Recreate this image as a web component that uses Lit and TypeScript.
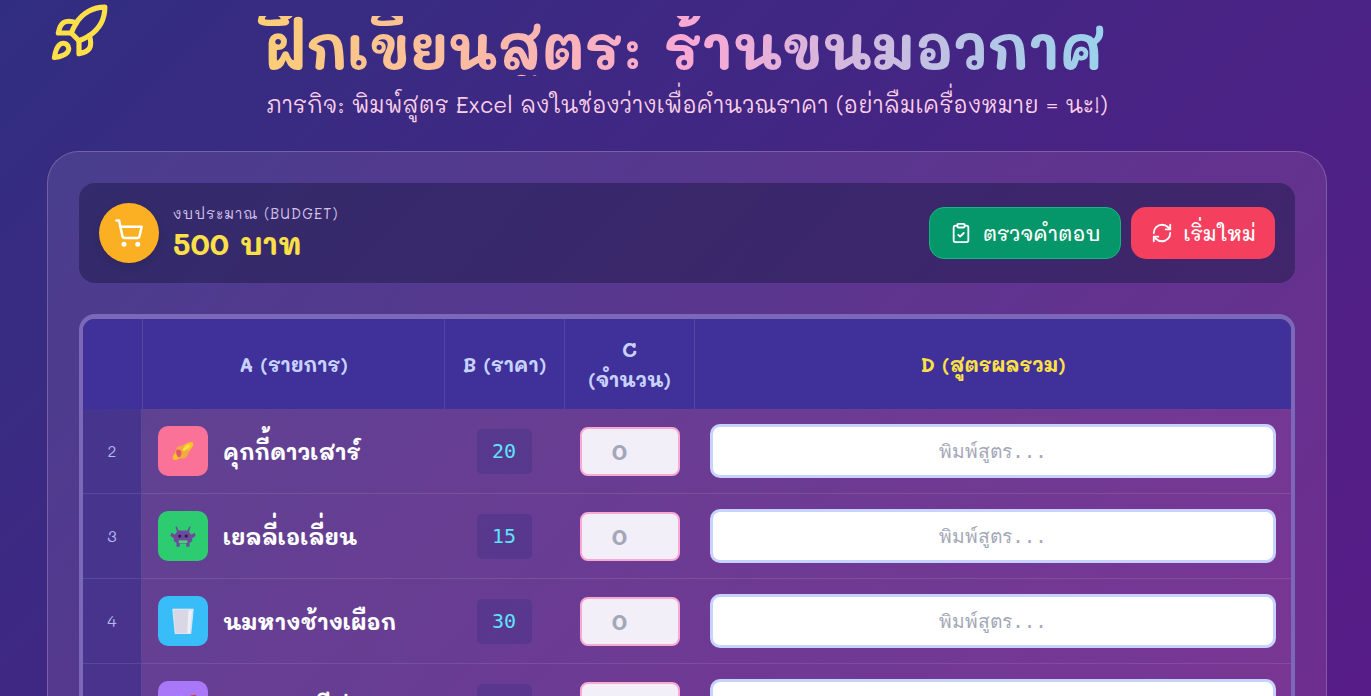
import { LitElement, html, css, svg } from 'lit';
import { customElement } from 'lit/decorators.js';

const planet = svg`<svg class="pic" viewBox="0 0 24 24"><ellipse cx="12" cy="12" rx="12" ry="4" transform="rotate(-40 12 12)" fill="#f7c51f"/><circle cx="11" cy="13" r="6" fill="#efae3a"/><path d="M6 11c2-1 4 0 4.500 2s-.5 4-2 5c-2-1-3.500-4-2.500-7z" fill="#e4566e"/><ellipse cx="15" cy="9" rx="4" ry="1.500" transform="rotate(-40 15 9)" fill="#fcdc55"/></svg>`;

const alien = svg`<svg class="pic" viewBox="0 0 24 24"><path d="M6 3l2 4h8l2-4 1 .5-1.500 4.500 2 2.500L23 9l.5 3-3 2v2.500l-2.500 2V22h-3v-3H9v3H6v-3.500l-2.500-2V14l-3-2L1 9l3.500 1.500 2-2.500L5 3.500z" fill="#6d4a9c"/><circle cx="9" cy="12" r="1.500" fill="#2c1c50"/><circle cx="15" cy="12" r="1.500" fill="#2c1c50"/><rect x="8" y="16" width="8" height="2.500" fill="#4cd080"/></svg>`;

const glass = svg`<svg class="pic" viewBox="0 0 24 24"><path d="M2.500 1h19l-2.300 23H4.800z" fill="#d9d7e5" stroke="#f4f6fb" stroke-width=".6"/><path d="M17 2h3.500l-2.100 21H16z" fill="#eef0f7"/></svg>`;

const rows = [
  { n: 2, icon: planet, tone: 'pink', name: 'คุกกี้ดาวเสาร์', price: 20 },
  { n: 3, icon: alien, tone: 'green', name: 'เยลลี่เอเลี่ยน', price: 15 },
  { n: 4, icon: glass, tone: 'blue', name: 'นมหางช้างเผือก', price: 30 },
  { n: 5, icon: html`🚀`, tone: 'violet', name: 'ขนมยานสีม่วง', price: 25 },
];

const rocket = svg`<path d="M4.5 16.500c-1.500 1.260-2 5-2 5s3.740-.5 5-2c.710-.840.700-2.130-.090-2.910a2.180 2.180 0 0 0-2.910-.090z"/><path d="m12 15-3-3a22 22 0 0 1 2-3.950A12.880 12.880 0 0 1 22 2c0 2.720-.780 7.500-6 11a22.350 22.350 0 0 1-4 2z"/><path d="M9 12H4s.550-3.030 2-4c1.620-1.080 5 0 5 0"/><path d="M12 15v5s3.030-.550 4-2c1.080-1.620 0-5 0-5"/>`;

@customElement('app-root')
export class AppRoot extends LitElement {
  static styles = css`
    :host {
      display: block;
      height: 696px;
      overflow: hidden;
      background: linear-gradient(135deg, #312e81, #581c87);
      font-family: 'Mali', 'Liberation Sans', sans-serif;
      color: #fff;
    }
    .page {
      position: relative;
      width: 1280px;
      margin-left: 47px;
    }
    .rocket {
      position: absolute;
      left: 1px;
      top: 2px;
      width: 62px;
      height: 62px;
      fill: none;
      stroke: #fde047;
      stroke-width: 2;
      stroke-linecap: round;
      stroke-linejoin: round;
    }
    header {
      height: 151px;
      text-align: center;
      box-sizing: border-box;
      padding-top: 16px;
    }
    h1 {
      margin: 0 0 14px;
      padding-right: 5px;
      font-size: 60.2px;
      line-height: 60px;
      font-weight: 700;
      background: linear-gradient(90deg, #fde047, #f9a8d4, #67e8f9);
      -webkit-background-clip: text;
      background-clip: text;
      color: transparent;
    }
    .sub {
      margin: 0;
      font-size: 22.5px;
      line-height: 28px;
      color: #fbcfe8;
    }
    .card {
      box-sizing: border-box;
      height: 700px;
      padding: 31px;
      border: 1px solid rgba(255, 255, 255, 0.2);
      border-bottom: 0;
      border-radius: 32px 32px 0 0;
      background: linear-gradient(120deg, rgba(255, 220, 255, 0.1), rgba(250, 150, 200, 0.14));
    }
    .bar {
      display: flex;
      align-items: center;
      justify-content: space-between;
      height: 100px;
      box-sizing: border-box;
      padding: 0 20px;
      border-radius: 16px;
      background: rgba(30, 27, 75, 0.52);
    }
    .budget {
      display: flex;
      align-items: center;
      gap: 14px;
    }
    .coin {
      width: 60px;
      height: 60px;
      border-radius: 50%;
      background: #fbb024;
      display: flex;
      align-items: center;
      justify-content: center;
      box-shadow: 0 4px 10px rgba(0, 0, 0, 0.12);
    }
    .coin svg,
    .btn svg {
      fill: none;
      stroke: currentColor;
      stroke-width: 2;
      stroke-linecap: round;
      stroke-linejoin: round;
    }
    .label {
      font-size: 14.4px;
      line-height: 18px;
      margin-bottom: 2px;
      color: #d8c4ee;
      letter-spacing: 1.15px;
    }
    .amount {
      font-size: 30px;
      line-height: 36px;
      font-weight: 700;
      color: #fde047;
    }
    .actions {
      display: flex;
      gap: 10px;
    }
    .btn {
      display: flex;
      align-items: center;
      gap: 10px;
      height: 52px;
      box-sizing: border-box;
      padding: 0 20px;
      border-radius: 15px;
      font-size: 20px;
      font-weight: 500;
      color: #fff;
    }
    .btn.check {
      gap: 11px;
      background: #059669;
      border: 1px solid #10b981;
    }
    .btn.reset {
      padding-right: 19px;
      background: #f43f5e;
    }
    .sheet {
      margin-top: 31px;
      border: 4px solid #7c68b8;
      border-top-width: 5px;
      border-radius: 16px;
      overflow: hidden;
    }
    .grid {
      display: grid;
      grid-template-columns: 59px 302px 120px 130px 1fr;
    }
    .th {
      height: 90px;
      display: flex;
      align-items: center;
      justify-content: center;
      text-align: center;
      background: #3f3199;
      border-left: 1px solid rgba(255, 255, 255, 0.1);
      font-weight: 700;
      font-size: 20px;
      line-height: 30px;
      color: #c7d2fe;
    }
    .th:first-child {
      border-left: 0;
    }
    .th.formula {
      color: #fde047;
    }
    .td {
      height: 85px;
      box-sizing: border-box;
      border-bottom: 1px solid rgba(255, 255, 255, 0.1);
      display: flex;
      align-items: center;
      justify-content: center;
      background: rgba(240, 130, 190, 0.1);
    }
    .td.pad {
      padding-left: 1px;
    }
    .num {
      background: rgba(60, 46, 140, 0.45);
      color: #b4b8f0;
      font-size: 16px;
      padding-bottom: 2px;
      border-right: 1px solid rgba(255, 255, 255, 0.1);
    }
    .item {
      justify-content: flex-start;
      gap: 15px;
      padding-left: 16px;
      font-size: 22.4px;
      font-weight: 700;
    }
    .thumb {
      width: 50px;
      height: 50px;
      border-radius: 10px;
      display: flex;
      align-items: center;
      justify-content: center;
      font-size: 24px;
    }
    .pic {
      width: 26px;
      height: 26px;
    }
    .pink { background: #fb7299; }
    .green { background: #2ecc71; }
    .blue { background: #38bdf8; }
    .violet { background: #a878f8; }
    .price {
      width: 55px;
      height: 45px;
      border-radius: 5px;
      background: rgba(49, 46, 129, 0.3);
      color: #5ee3ff;
      display: flex;
      align-items: center;
      justify-content: center;
      font-family: 'DejaVu Sans Mono', monospace;
      font-size: 20px;
    }
    .qty {
      width: 100px;
      height: 49px;
      box-sizing: border-box;
      border: 2px solid #f9a8d4;
      border-radius: 8px;
      background: #f3eff8;
      color: #a3a8b8;
      font-weight: 700;
      font-size: 24px;
      text-align: center;
      padding: 0 20px 0 0;
      line-height: 43px;
    }
    .formula-box {
      flex: 1;
      margin: 0 15px;
      height: 54px;
      box-sizing: border-box;
      border: 3px solid #c7d2fe;
      border-radius: 10px;
      background: #fff;
      color: #a3a8b8;
      display: flex;
      align-items: center;
      justify-content: center;
      font-family: 'DejaVu Sans Mono', monospace;
      font-size: 19.2px;
    }
  `;

  render() {
    return html`
      <div class="page">
        <svg class="rocket" viewBox="0 0 24 24">${rocket}</svg>
        <header>
          <h1>ฝึกเขียนสูตร: ร้านขนมอวกาศ</h1>
          <p class="sub">ภารกิจ: พิมพ์สูตร Excel ลงในช่องว่างเพื่อคำนวณราคา (อย่าลืมเครื่องหมาย = นะ!)</p>
        </header>
        <div class="card">
          <div class="bar">
            <div class="budget">
              <div class="coin">
                <svg width="30" height="30" viewBox="0 0 24 24"><circle cx="8" cy="21" r="1"/><circle cx="19" cy="21" r="1"/><path d="M2.050 2.050h2l2.660 12.420a2 2 0 0 0 2 1.580h9.780a2 2 0 0 0 1.950-1.570l1.650-7.430H5.120"/></svg>
              </div>
              <div>
                <div class="label">งบประมาณ (BUDGET)</div>
                <div class="amount">500 บาท</div>
              </div>
            </div>
            <div class="actions">
              <div class="btn check">
                <svg width="22" height="22" viewBox="0 0 24 24"><rect width="8" height="4" x="8" y="2" rx="1" ry="1"/><path d="M16 4h2a2 2 0 0 1 2 2v14a2 2 0 0 1-2 2H6a2 2 0 0 1-2-2V6a2 2 0 0 1 2-2h2"/><path d="m9 14 2 2 4-4"/></svg>
                ตรวจคำตอบ
              </div>
              <div class="btn reset">
                <svg width="22" height="22" viewBox="0 0 24 24"><path d="M3 12a9 9 0 0 1 9-9 9.750 9.750 0 0 1 6.740 2.740L21 8"/><path d="M21 3v5h-5"/><path d="M21 12a9 9 0 0 1-9 9 9.750 9.750 0 0 1-6.740-2.740L3 16"/><path d="M8 16H3v5"/></svg>
                เริ่มใหม่
              </div>
            </div>
          </div>
          <div class="sheet">
            <div class="grid">
              <div class="th"></div>
              <div class="th">A (รายการ)</div>
              <div class="th">B (ราคา)</div>
              <div class="th">C<br />(จำนวน)</div>
              <div class="th formula">D (สูตรผลรวม)</div>
              ${rows.map(
                (r) => html`
                  <div class="td num">${r.n}</div>
                  <div class="td item"><span class="thumb ${r.tone}">${r.icon}</span>${r.name}</div>
                  <div class="td"><span class="price">${r.price}</span></div>
                  <div class="td pad"><div class="qty">0</div></div>
                  <div class="td pad"><div class="formula-box">พิมพ์สูตร...</div></div>
                `,
              )}
            </div>
          </div>
        </div>
      </div>
    `;
  }
}
